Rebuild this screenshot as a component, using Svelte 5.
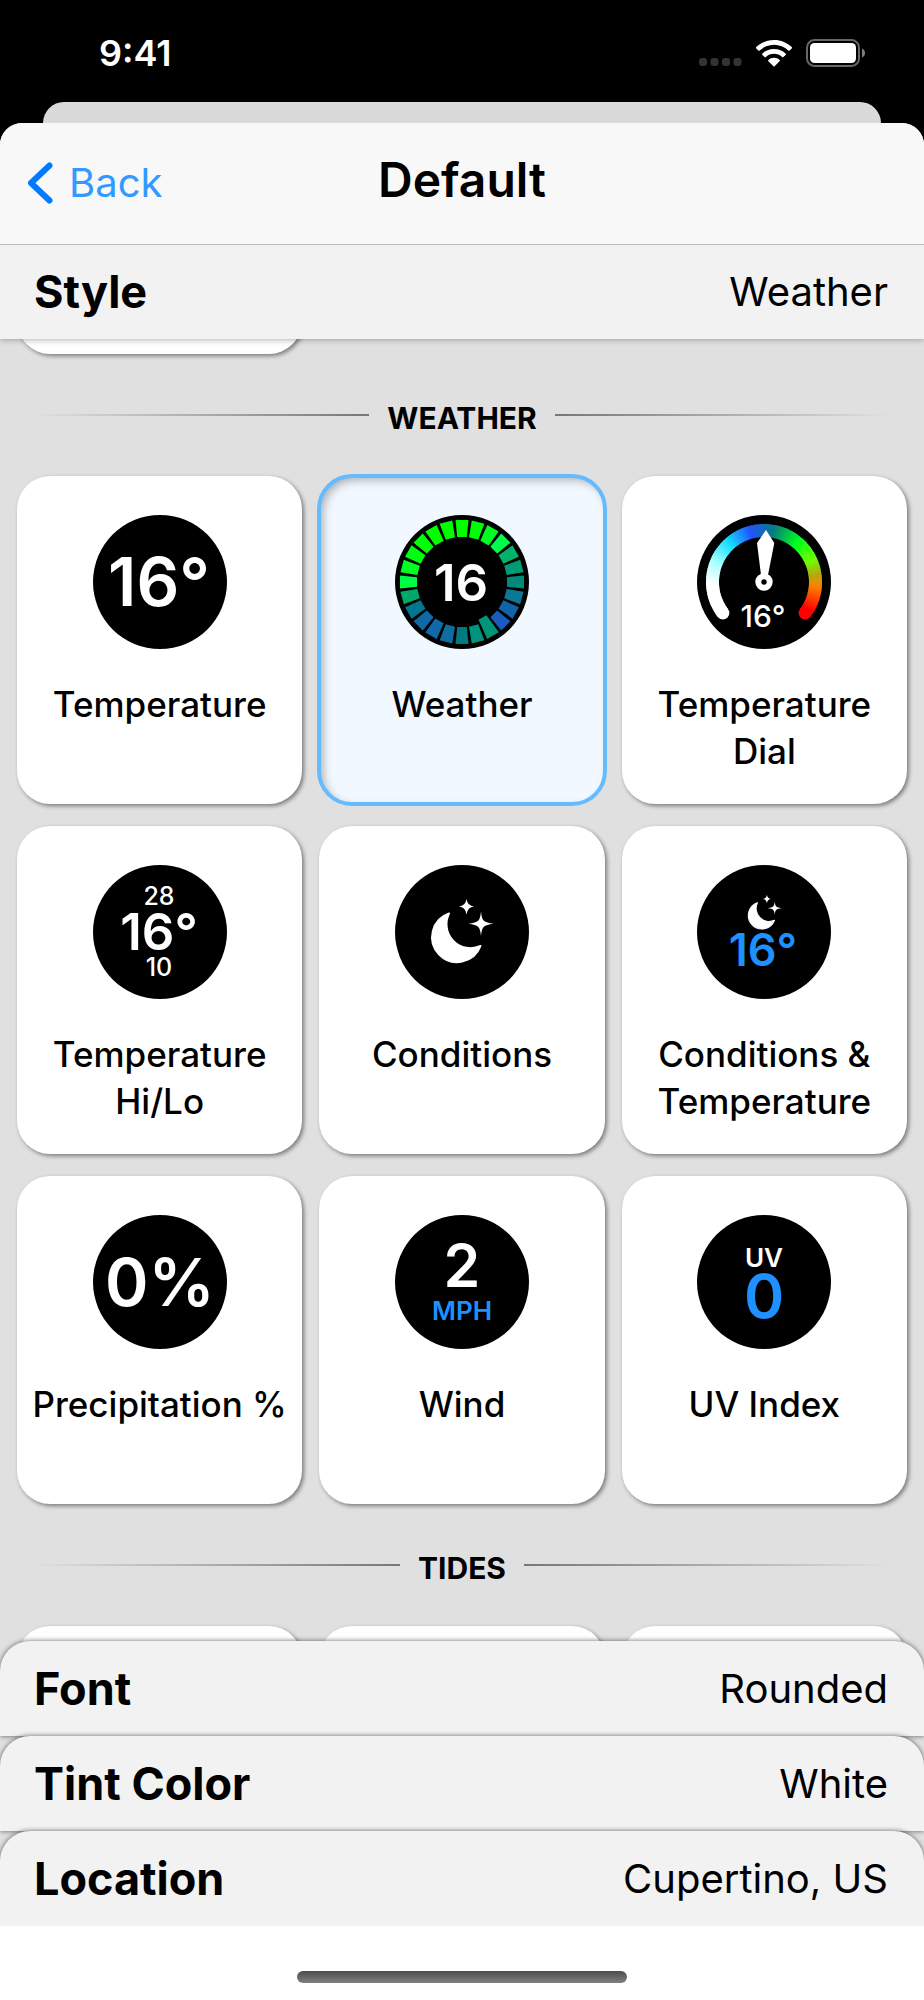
<script lang="ts">
	type Style = { id: string; label: string };
	type Setting = { name: string; value: string };

	const weather: Style[] = [
		{ id: 'temperature', label: 'Temperature' },
		{ id: 'weather', label: 'Weather' },
		{ id: 'dial', label: 'Temperature Dial' },
		{ id: 'hilo', label: 'Temperature Hi/Lo' },
		{ id: 'conditions', label: 'Conditions' },
		{ id: 'conditions-temp', label: 'Conditions & Temperature' },
		{ id: 'precipitation', label: 'Precipitation %' },
		{ id: 'wind', label: 'Wind' },
		{ id: 'uv', label: 'UV Index' }
	];

	const settings: Setting[] = [
		{ name: 'Font', value: 'Rounded' },
		{ name: 'Tint Color', value: 'White' },
		{ name: 'Location', value: 'Cupertino, US' }
	];

	// one colour per hour, clockwise from the top
	const hours = [
		'#00ff00', '#00ff04', '#00ff20', '#00ff48', '#00b36b', '#009b75',
		'#008a7a', '#0b7896', '#1065aa', '#1a5cbe', '#009577', '#00947c',
		'#007a80', '#0f6ea0', '#0f69aa', '#0f69a8', '#047590', '#00a86a',
		'#00ff44', '#00ff22', '#00ff11', '#00ff08', '#00ff00', '#00ff00'
	];
	const currentHour = 10;

	// dial colours: degrees from the top, then r, g, b
	const stops = [
		[-127, 255, 255, 255],
		[-92, 255, 255, 255],
		[-68, 170, 255, 255],
		[-42, 20, 222, 255],
		[-15, 31, 85, 255],
		[10, 8, 122, 128],
		[40, 0, 255, 30],
		[65, 110, 255, 0],
		[82, 180, 170, 16],
		[95, 255, 128, 0],
		[122, 255, 0, 0],
		[127, 255, 0, 0]
	];

	function dialColor(deg: number) {
		const i = Math.max(1, stops.findIndex((s) => s[0] >= deg));
		const [a, b] = [stops[i - 1], stops[i]];
		const t = (deg - a[0]) / (b[0] - a[0]);
		return `rgb(${[1, 2, 3].map((k) => Math.round(a[k] + (b[k] - a[k]) * t)).join(' ')})`;
	}

	function point(deg: number, r: number) {
		const a = (deg * Math.PI) / 180;
		return `${(67 + r * Math.sin(a)).toFixed(2)} ${(67 - r * Math.cos(a)).toFixed(2)}`;
	}

	const arcs = Array.from({ length: 127 }, (_, i) => {
		const from = -127 + i * 2;
		const to = Math.min(from + 3, 127);
		return { d: `M${point(from, 51.5)}A51.5 51.5 0 0 1 ${point(to, 51.5)}`, color: dialColor(from + 1) };
	});

	let selected = $state('weather');
</script>

{#snippet moon()}
	<path
		d="M54 48.5A25 25 0 1 0 85.5 81A24 24 0 0 1 54 48.5Z"
		stroke="#fff"
		stroke-width="2"
		stroke-linejoin="round"
	/>
	<path d="M71.5 34Q72.5 41 79 41.5Q72.5 42 71.5 49.5Q70.5 42 64 41.5Q70.5 41 71.5 34Z" />
	<path
		d="M86 46.5C87 56 88.5 57.5 98.5 58.7C88.5 60 87 61.5 86 71C85 61.5 83.5 60 73.5 58.7C83.5 57.5 85 56 86 46.5Z"
	/>
{/snippet}

{#snippet face(id: string)}
	<svg class="face" viewBox="0 0 134 134" aria-hidden="true">
		<circle cx="67" cy="67" r="67" fill="#000" />
		<g fill="#fff">
			{#if id === 'temperature'}
				<text x="66" y="91" font-size="67">16°</text>
			{:else if id === 'weather'}
				{#each hours as color, i}
					<path
						d={i === currentHour ? 'M60.3 5H73.7L71.6 26H62.4Z' : 'M60.5 5H73.5L71.8 22H62.2Z'}
						fill={color}
						transform="rotate({i * 15} 67 67)"
					/>
				{/each}
				<text x="66" y="86" font-size="51">16</text>
			{:else if id === 'dial'}
				<circle cx="25.9" cy="98" r="6.5" />
				<circle cx="108.1" cy="98" r="6.5" fill="#f00" />
				{#each arcs as arc}
					<path d={arc.d} fill="none" stroke={arc.color} stroke-width="13" />
				{/each}
				<path d="M69 15L77.3 28L71 60H64L60 28Z" />
				<circle cx="67" cy="67" r="5.7" fill="#000" stroke="#fff" stroke-width="6" />
				<text class="light" x="66" y="112" font-size="30">16°</text>
			{:else if id === 'hilo'}
				<text class="light" x="66" y="40" font-size="25">28</text>
				<text x="66" y="85" font-size="51">16°</text>
				<text class="light" x="66" y="111" font-size="25">10</text>
			{:else if id === 'conditions'}
				{@render moon()}
			{:else if id === 'conditions-temp'}
				<g transform="translate(31.3 11.5) scale(.54)">{@render moon()}</g>
				<text class="tint" x="66" y="101" font-size="45">16°</text>
			{:else if id === 'precipitation'}
				<text x="67" y="91" font-size="66">0%</text>
			{:else if id === 'wind'}
				<text x="67" y="72" font-size="59">2</text>
				<text class="tint" x="67" y="105" font-size="26">MPH</text>
			{:else if id === 'uv'}
				<text x="67" y="52" font-size="26">UV</text>
				<text class="tint" x="67" y="103" font-size="61">0</text>
			{/if}
		</g>
	</svg>
{/snippet}

{#snippet setting(s: Setting)}
	<button class="setting">
		<span class="name">{s.name}</span>
		<span class="value">{s.value}</span>
	</button>
{/snippet}

<div class="screen">
	<div class="status">
		<time>9:41</time>
		<svg width="43" height="28" viewBox="0 0 43 28" fill="#333" aria-hidden="true">
			{#each [0, 1, 2, 3] as i}
				<rect x={i * 11.5} y="19" width="8" height="8" rx="3" />
			{/each}
		</svg>
		<svg class="wifi" width="36" height="28" viewBox="0 0 36 28" fill="#fff" aria-hidden="true">
			<path d="M18 1C25 1 31.3 3.7 35.7 8.1Q36.4 8.8 35.7 9.5L33.6 11.6Q33 12.2 32.3 11.6A20.5 20.5 0 0 0 3.7 11.6Q3 12.2 2.4 11.6L.3 9.5Q-.4 8.8 .3 8.1C4.7 3.7 11 1 18 1Z" />
			<path d="M18 10C22.5 10 26.6 11.7 29.6 14.5Q30.3 15.2 29.6 15.9L27.4 18Q26.8 18.6 26.1 18A12 12 0 0 0 9.9 18Q9.2 18.6 8.6 18L6.4 15.9Q5.7 15.2 6.4 14.5C9.4 11.7 13.5 10 18 10Z" />
			<path d="M18 18.8C20.2 18.8 22.2 19.6 23.6 20.9Q24.3 21.6 23.6 22.3L18.6 27.3Q18 27.9 17.4 27.3L12.4 22.3Q11.7 21.6 12.4 20.9C13.8 19.6 15.8 18.8 18 18.8Z" />
		</svg>
		<svg width="59" height="28" viewBox="0 0 59 28" aria-hidden="true">
			<rect x="1" y="1" width="52" height="26" rx="7.5" fill="none" stroke="#666" stroke-width="2" />
			<rect x="4" y="4" width="46" height="20" rx="4.5" fill="#fff" />
			<path d="M56 9.5Q59 11 59 14T56 18.5Z" fill="#7d7d7d" />
		</svg>
	</div>
	<div class="behind"></div>

	<main>
		<header>
			<a href="#back">
				<svg width="26" height="42" viewBox="0 0 26 42" aria-hidden="true">
					<path d="M22.5 3.5L4 21L22.5 38.5" fill="none" stroke="#007aff" stroke-width="6" stroke-linecap="round" stroke-linejoin="round" />
				</svg>
				Back
			</a>
			<h1>Default</h1>
		</header>

		<div class="open">{@render setting({ name: 'Style', value: 'Weather' })}</div>

		<div class="styles">
			<div class="grid passed"><div class="card"></div></div>

			<h2><span>Weather</span></h2>
			<div class="grid">
				{#each weather as s}
					<button
						class="card"
						class:selected={selected === s.id}
						aria-pressed={selected === s.id}
						onclick={() => (selected = s.id)}
					>
						{@render face(s.id)}
						<span>{s.label}</span>
					</button>
				{/each}
			</div>

			<h2><span>Tides</span></h2>
			<div class="grid">
				{#each [0, 1, 2] as _}
					<div class="card"></div>
				{/each}
			</div>
		</div>

		<div class="settings">
			{#each settings as s}
				{@render setting(s)}
			{/each}
		</div>
		<footer><div class="home"></div></footer>
	</main>
</div>

<style>
	:global(body) {
		margin: 0;
		background: #000;
	}

	.screen {
		display: flex;
		flex-direction: column;
		height: 100vh;
		font-family: Inter, 'Liberation Sans', sans-serif;
		color: #000;
	}

	.status {
		display: flex;
		align-items: center;
		box-sizing: border-box;
		height: 102px;
		padding: 4px 59px 0 99px;
		color: #fff;
	}

	time {
		margin-right: auto;
		font-size: 36px;
		font-weight: 600;
	}

	.wifi {
		margin: 0 14px;
	}

	.behind {
		height: 21px;
		margin: 0 43px;
		border-radius: 22px 22px 0 0;
		background: #dadada;
	}

	main {
		display: flex;
		flex-direction: column;
		flex: 1;
		min-height: 0;
		overflow: hidden;
		border-radius: 22px 22px 0 0;
		background: #fff;
	}

	header {
		position: relative;
		z-index: 2;
		display: grid;
		grid-template-columns: 1fr auto 1fr;
		align-items: center;
		box-sizing: border-box;
		height: 122px;
		padding: 0 27px 9px;
		border-bottom: 1px solid #bbb;
		background: #f8f8f8;
	}

	header a {
		display: flex;
		align-items: center;
		gap: 16px;
		padding-top: 7px;
		font-size: 40px;
		color: #39f;
		text-decoration: none;
	}

	h1 {
		margin: 0;
		font-size: 48px;
		font-weight: 600;
	}

	button {
		border: 0;
		font-family: inherit;
		color: inherit;
		cursor: pointer;
	}

	.setting {
		display: flex;
		align-items: center;
		justify-content: space-between;
		width: 100%;
		height: 95px;
		padding: 0 36px 0 34px;
		background: #f2f2f2;
	}

	.name {
		font-size: 45px;
		font-weight: 700;
	}

	.value {
		font-size: 40px;
	}

	/* tucked under the header's hairline */
	.open {
		position: relative;
		z-index: 1;
		margin-top: -1px;
		box-shadow: 0 1px 6px rgb(0 0 0 / 0.3);
	}

	.styles {
		flex: 1;
		min-height: 0;
		overflow: hidden;
		background: #e0e0e0;
	}

	.grid {
		display: grid;
		grid-template-columns: repeat(3, 1fr);
		gap: 22px 17px;
		padding: 0 17px;
	}

	/* the last card of the section that has scrolled out at the top */
	.passed {
		height: 15px;
		align-content: end;
	}

	h2 {
		display: flex;
		align-items: center;
		gap: 18px;
		height: 122px;
		margin: 0;
		padding: 0 34px;
		font-size: 30px;
		font-weight: 700;
		text-transform: uppercase;
	}

	h2 span {
		padding-top: 5px;
	}

	h2::before,
	h2::after {
		content: '';
		flex: 1;
		height: 2px;
		background: linear-gradient(to left, #777, #e0e0e0);
	}

	h2::after {
		background: linear-gradient(to right, #777, #e0e0e0);
	}

	.card {
		display: flex;
		flex-direction: column;
		align-items: center;
		gap: 32px;
		box-sizing: border-box;
		height: 328px;
		padding: 39px 6px 0;
		border-radius: 33px;
		background: #fff;
		box-shadow: 2px 2px 4px rgb(0 0 0 / 0.45);
		font-size: 35px;
		font-weight: 500;
		line-height: 47px;
		text-align: center;
	}

	.selected {
		outline: 4px solid #6bf;
		outline-offset: -2px;
		background: #f2f8ff;
		box-shadow: inset 4px 4px 10px rgb(0 0 0 / 0.3);
	}

	.face {
		flex: none;
		width: 134px;
		height: 134px;
	}

	.face text {
		font-weight: 600;
		text-anchor: middle;
	}

	.face .light {
		font-weight: 500;
	}

	.tint {
		fill: #1e90ff;
	}

	.settings {
		position: relative;
		background: #e0e0e0;
	}

	.settings .setting {
		border-radius: 30px 30px 0 0;
		box-shadow: 0 0 5px rgb(0 0 0 / 0.6);
	}

	footer {
		position: relative;
		display: flex;
		justify-content: center;
		align-items: flex-end;
		box-sizing: border-box;
		height: 74px;
		padding-bottom: 17px;
		background: #fff;
	}

	.home {
		width: 330px;
		height: 12px;
		border-radius: 6px;
		background: linear-gradient(#4c4c4c, #808080);
	}
</style>
